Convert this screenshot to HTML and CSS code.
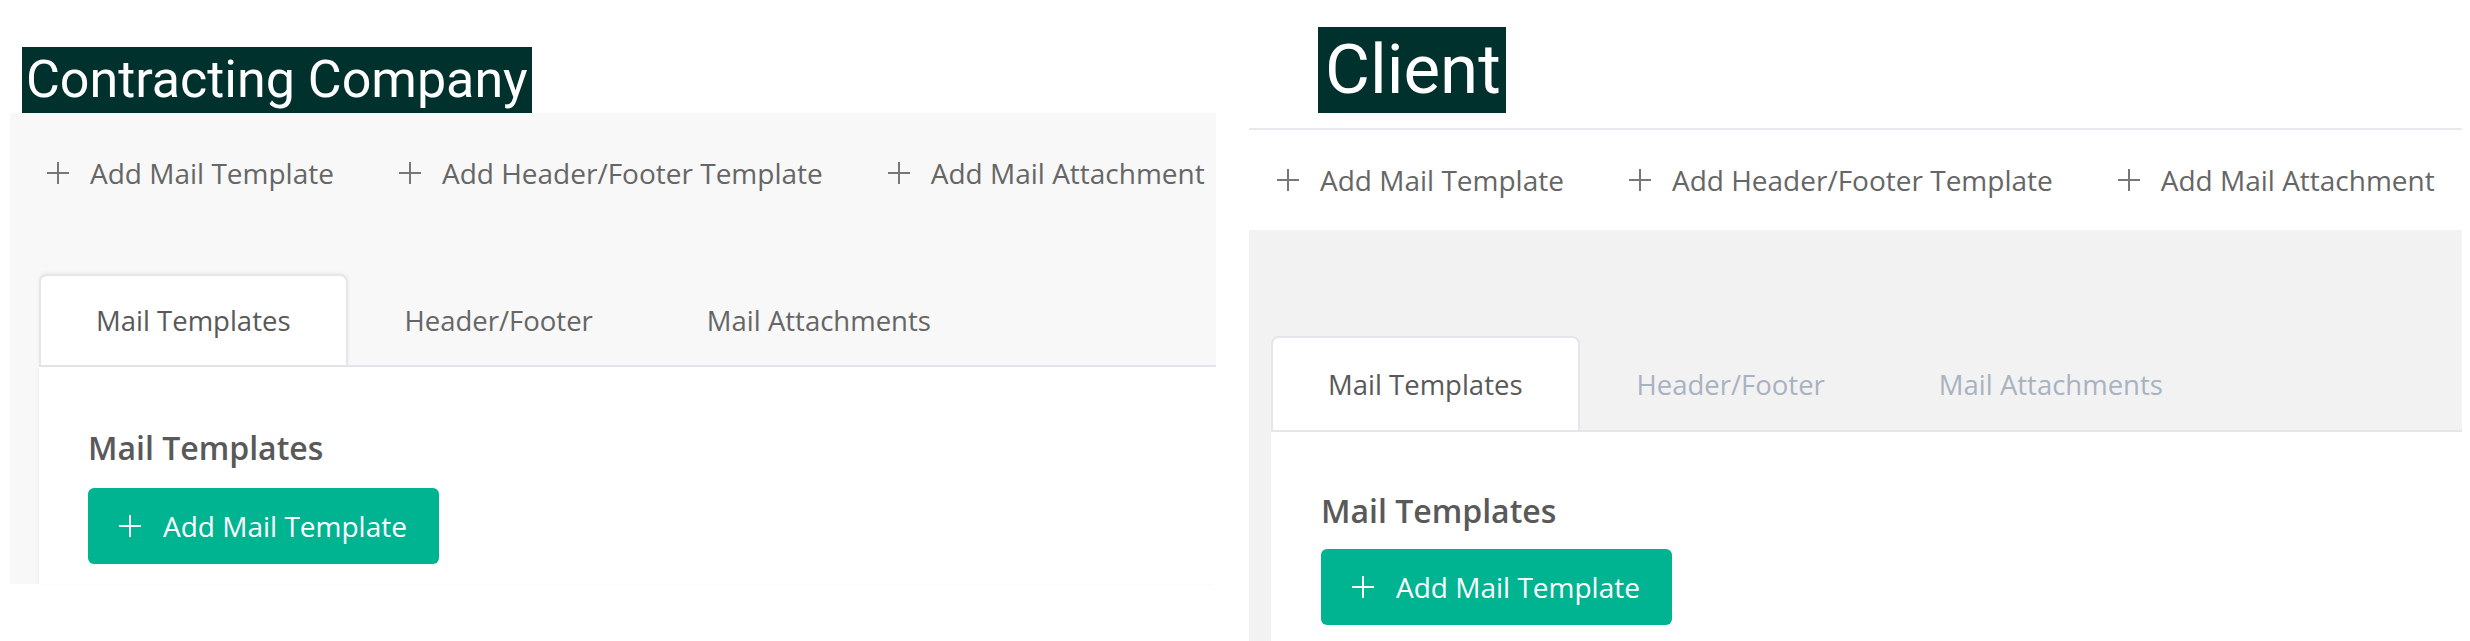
FILE: index.html
```html
<!DOCTYPE html>
<html lang="en">
<head>
  <meta charset="UTF-8" />
  <meta name="viewport" content="width=device-width, initial-scale=1.0"/>
  <title>Mail Templates – Contracting Company vs Client</title>
  <link rel="stylesheet" href="styles.css">
</head>
<body>

  <!-- Contracting company view -->
  <div class="shot shot-contractor">
    <div class="caption"><span>Contracting Company</span></div>
    <div class="page">
      <div class="toolbar">
        <a class="tool">
          <svg class="plus" viewBox="0 0 22 22"><path d="M11 0v22M0 11h22"/></svg>
          Add Mail Template
        </a>
        <a class="tool">
          <svg class="plus" viewBox="0 0 22 22"><path d="M11 0v22M0 11h22"/></svg>
          Add Header/Footer Template
        </a>
        <a class="tool">
          <svg class="plus" viewBox="0 0 22 22"><path d="M11 0v22M0 11h22"/></svg>
          Add Mail Attachment
        </a>
      </div>
      <div class="tab-area">
        <div class="tabs">
          <div class="tab active">Mail Templates</div>
          <div class="tab">Header/Footer</div>
          <div class="tab">Mail Attachments</div>
        </div>
        <div class="tab-body">
          <h3>Mail Templates</h3>
          <button class="btn-add">
            <svg class="plus" viewBox="0 0 22 22"><path d="M11 0v22M0 11h22"/></svg>
            Add Mail Template
          </button>
        </div>
      </div>
    </div>
  </div>

  <!-- Client view -->
  <div class="shot shot-client">
    <div class="caption"><span>Client</span></div>
    <div class="page">
      <div class="toolbar">
        <a class="tool">
          <svg class="plus" viewBox="0 0 22 22"><path d="M11 0v22M0 11h22"/></svg>
          Add Mail Template
        </a>
        <a class="tool">
          <svg class="plus" viewBox="0 0 22 22"><path d="M11 0v22M0 11h22"/></svg>
          Add Header/Footer Template
        </a>
        <a class="tool">
          <svg class="plus" viewBox="0 0 22 22"><path d="M11 0v22M0 11h22"/></svg>
          Add Mail Attachment
        </a>
      </div>
      <div class="tab-area">
        <div class="tabs">
          <div class="tab active">Mail Templates</div>
          <div class="tab">Header/Footer</div>
          <div class="tab">Mail Attachments</div>
        </div>
        <div class="tab-body">
          <h3>Mail Templates</h3>
          <button class="btn-add">
            <svg class="plus" viewBox="0 0 22 22"><path d="M11 0v22M0 11h22"/></svg>
            Add Mail Template
          </button>
        </div>
      </div>
    </div>
  </div>

</body>
</html>
```

FILE: styles.css
```css
:root {
  --caption-bg: #00312c;
  --text: #666;
  --text-dark: #595959;
  --accent: #00b491;
  --line: #e3e6eb;
}

body {
  margin: 0;
  width: 2470px;
  height: 641px;
  overflow: hidden;
  background: #fff;
  display: flex;
  align-items: flex-start;
  font-family: "Open Sans", "Noto Sans", sans-serif;
  color: var(--text);
}

.shot {
  display: flex;
  flex-direction: column;
}

/* caption labels above each screenshot */
.caption span {
  display: inline-block;
  background: var(--caption-bg);
  color: #fff;
  font-family: Roboto, "Liberation Sans", sans-serif;
  padding: 0 4px;
}

.plus {
  width: 22px;
  height: 22px;
  flex: none;
  fill: none;
  stroke: currentColor;
  stroke-width: 2;
}

.toolbar {
  display: flex;
  align-items: center;
  gap: 65px;
  font-size: 28px;
}

.tool {
  display: flex;
  align-items: center;
  gap: 21px;
  color: var(--text);
  white-space: nowrap;
}

.tool .plus {
  color: #777;
}

.tabs {
  display: flex;
  border-bottom: 2px solid var(--line);
}

.tab {
  display: flex;
  align-items: center;
  padding: 0 55px;
  font-size: 27.5px;
  border: 2px solid transparent;
  border-bottom: none;
  white-space: nowrap;
}

.tab.active {
  background: #fff;
  border-color: var(--line);
  border-radius: 8px 8px 0 0;
  margin-bottom: -2px;
  color: var(--text-dark);
}

.tab-body {
  background: #fff;
}

.tab-body h3 {
  margin: 0 0 20px;
  font-size: 32px;
  line-height: 40px;
  font-weight: 600;
  color: var(--text-dark);
}

.btn-add {
  display: flex;
  align-items: center;
  gap: 22px;
  height: 76px;
  padding: 0 32px 0 31px;
  border: none;
  border-radius: 6px;
  background: var(--accent);
  color: #fff;
  font-family: inherit;
  font-size: 28px;
}

/* left: contracting company */
.shot-contractor {
  width: 1206px;
  margin-left: 10px;
}

.shot-contractor .caption {
  padding: 47px 0 0 12px;
}

.shot-contractor .caption span {
  font-size: 52px;
  line-height: 66px;
}

.shot-contractor .page {
  background: #f8f8f8;
}

.shot-contractor .toolbar {
  height: 120px;
  padding-left: 37px;
}

.shot-contractor .tab-area {
  padding: 41px 0 0 29px;
}

.shot-contractor .tab {
  height: 89px;
}

.shot-contractor .tab.active {
  box-shadow: 0 -1px 4px rgba(0, 0, 0, 0.06);
}

.shot-contractor .tab-body {
  padding: 61px 0 20px 49px;
  box-shadow: -2px 0 4px rgba(0, 0, 0, 0.03);
}

/* right: client */
.shot-client {
  width: 1213px;
  margin-left: 33px;
}

.shot-client .caption {
  padding: 27px 0 0 69px;
}

.shot-client .caption span {
  font-size: 69px;
  line-height: 86px;
  padding: 0 5px 0 7px;
}

.shot-client .page {
  margin-top: 15px;
  border-top: 2px solid #e6e9ed;
}

.shot-client .toolbar {
  height: 100px;
  padding-left: 28px;
}

.shot-client .tab-area {
  background: #f2f2f2;
  padding: 106px 0 0 22px;
}

.shot-client .tab {
  height: 92px;
  padding: 0 55px;
  color: #a9b2c0;
}

.shot-client .tab.active {
  color: var(--text-dark);
}

.shot-client .tab-body {
  padding: 59px 0 120px 50px;
}

.shot-client .tab-body h3 {
  margin-bottom: 18px;
}
```
